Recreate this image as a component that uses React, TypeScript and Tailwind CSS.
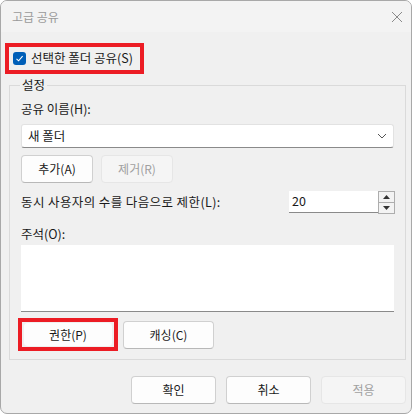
import React from 'react'

const font = { fontFamily: '"Noto Sans CJK KR", "Noto Sans", sans-serif' }

function Btn({ children, disabled, className = '' }: { children: React.ReactNode; disabled?: boolean; className?: string }) {
  return (
    <div
      className={
        'flex items-center justify-center rounded-[4px] border text-[12px] ' +
        (disabled
          ? 'border-[#e6e6e6] bg-[#f5f5f5] text-[#a0a0a0] '
          : 'border-[#d0d0d0] border-b-[#b8b8b8] bg-[#fdfdfd] text-[#1a1a1a] ') +
        className
      }
    >
      {children}
    </div>
  )
}

export default function App() {
  return (
    <div className="w-[414px] h-[417px] bg-white" style={font}>
      <div className="w-[412px] h-[414px] border border-[#a8a8a8] rounded-[7px] bg-[#f0f0f0] flex flex-col overflow-hidden">
        {/* title bar */}
        <div className="h-[31px] shrink-0 bg-[#f3f3f3] flex items-center justify-between pl-[11px] pr-[6px]">
          <span className="text-[12px] text-[#9a9a9a]">고급 공유</span>
          <svg width="12" height="12" viewBox="0 0 12 12" className="mr-[2px]">
            <path d="M1 1 L11 11 M11 1 L1 11" stroke="#8a8a8a" strokeWidth="1" />
          </svg>
        </div>

        {/* share checkbox */}
        <div className="mt-[11px] ml-[4px] w-[139px] h-[31px] border-[4px] border-[#ec1c24] flex items-center pl-[4px] gap-[5px]">
          <div className="w-[13px] h-[13px] rounded-[3px] bg-[#005fb8] flex items-center justify-center">
            <svg width="9" height="9" viewBox="0 0 9 9">
              <path d="M1.5 4.8 L3.6 6.8 L7.6 2.2" stroke="white" strokeWidth="1.1" fill="none" />
            </svg>
          </div>
          <span className="text-[12.5px] text-[#1a1a1a]">선택한 폴더 공유(S)</span>
        </div>

        {/* group box */}
        <fieldset className="mt-[4px] ml-[8px] w-[397px] h-[282px] border border-[#dadada] px-[11px] pb-0">
          <legend className="ml-[-1px] px-[2px] text-[12.5px] text-[#1a1a1a] leading-[14px]">설정</legend>

          <div className="mt-[9px] text-[12.5px] text-[#1a1a1a] leading-[16px]">공유 이름(H):</div>
          <div className="mt-[7px] h-[24px] bg-white border border-[#e2e2e2] border-b-[#8a8a8a] rounded-[3px] flex items-center justify-between pl-[6px] pr-[6px]">
            <span className="text-[12.5px] text-[#1a1a1a]">새 폴더</span>
            <svg width="10" height="6" viewBox="0 0 10 6">
              <path d="M1 1 L5 5 L9 1" stroke="#555" strokeWidth="1" fill="none" />
            </svg>
          </div>

          <div className="mt-[7px] flex gap-[8px]">
            <Btn className="w-[72px] h-[28px]">추가(A)</Btn>
            <Btn disabled className="w-[72px] h-[28px]">제거(R)</Btn>
          </div>

          <div className="mt-[8px] flex items-center justify-between">
            <span className="text-[12.5px] text-[#1a1a1a] tracking-[0.4px]">동시 사용자의 수를 다음으로 제한(L):</span>
            <div className="flex mr-[-1px]">
              <div className="w-[89px] h-[22px] bg-white border-b border-[#8a8a8a] flex items-center pl-[3px] text-[12.5px] text-[#1a1a1a]">20</div>
              <div className="w-[17px] h-[23px] border border-[#adadad] bg-[#f0f0f0] flex flex-col">
                <div className="flex-1 border-b border-[#adadad] bg-[#f3f3f3] flex items-center justify-center">
                  <svg width="7" height="4" viewBox="0 0 7 4"><path d="M0 4 L3.5 0 L7 4 Z" fill="#333" /></svg>
                </div>
                <div className="flex-1 bg-[#f3f3f3] flex items-center justify-center">
                  <svg width="7" height="4" viewBox="0 0 7 4"><path d="M0 0 L3.5 4 L7 0 Z" fill="#333" /></svg>
                </div>
              </div>
            </div>
          </div>

          <div className="mt-[12px] text-[12.5px] text-[#1a1a1a] leading-[16px]">주석(O):</div>
          <div className="mt-[3px] h-[67px] bg-white border-b border-[#8a8a8a]" />

          <div className="mt-[6px] flex items-center gap-[5px] ml-[-3px]">
            <div className="w-[100px] h-[33px] border-[4px] border-[#ec1c24] flex items-center justify-center">
              <Btn className="w-[88px] h-[23px] rounded-[2px] border-0">권한(P)</Btn>
            </div>
            <Btn className="w-[91px] h-[28px]">캐싱(C)</Btn>
          </div>
        </fieldset>

        {/* dialog buttons */}
        <div className="mt-[16px] flex justify-end gap-[10px] pr-[5px]">
          <Btn className="w-[85px] h-[28px]">확인</Btn>
          <Btn className="w-[85px] h-[28px]">취소</Btn>
          <Btn disabled className="w-[85px] h-[28px]">적용</Btn>
        </div>
      </div>
    </div>
  )
}
